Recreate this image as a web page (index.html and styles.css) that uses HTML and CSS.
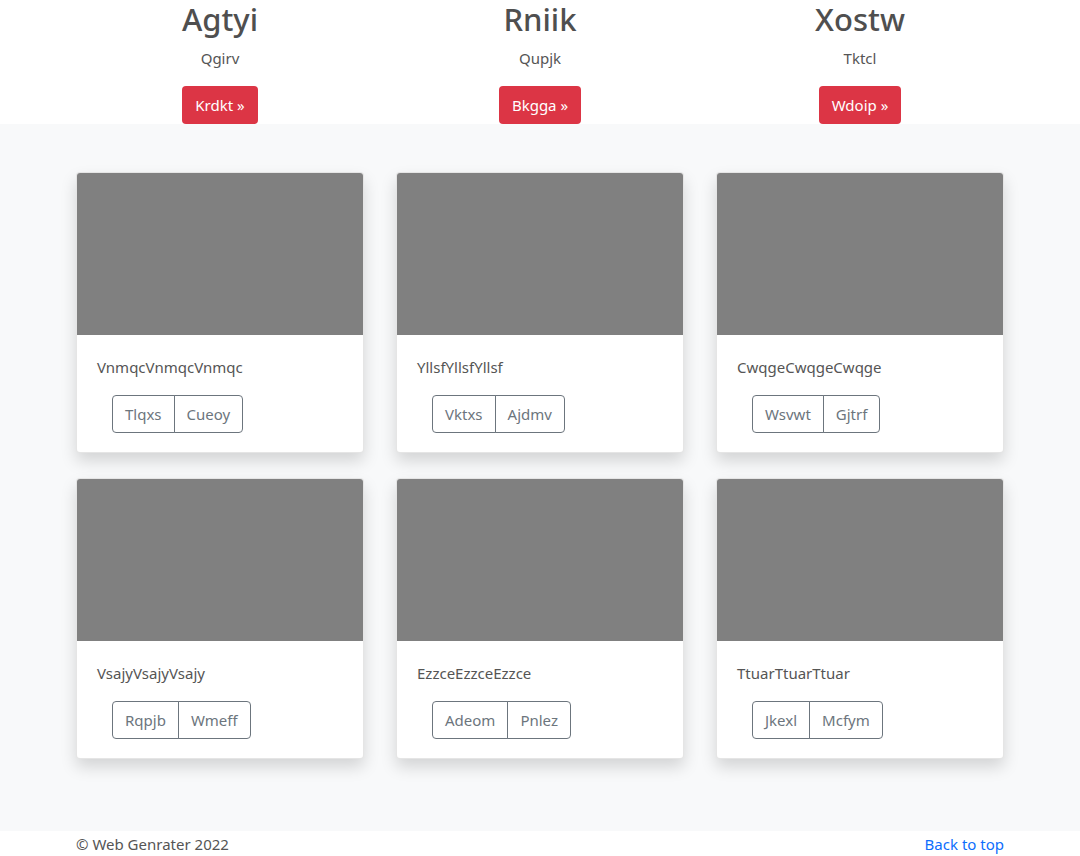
FILE: index.html
```html
<!DOCTYPE html>
<html lang="en">
<head>
<meta charset="utf-8">
<title>Album</title>
<link rel="stylesheet" href="styles.css">
</head>
<body>
<header class="top">
  <div class="top-grid">
    <div class="feature">
      <h2 class="feature-title">Agtyi</h2>
      <p class="feature-sub">Qgirv</p>
      <a class="btn-red" href="#">Krdkt &raquo;</a>
    </div>
    <div class="feature">
      <h2 class="feature-title">Rniik</h2>
      <p class="feature-sub">Qupjk</p>
      <a class="btn-red" href="#">Bkgga &raquo;</a>
    </div>
    <div class="feature">
      <h2 class="feature-title">Xostw</h2>
      <p class="feature-sub">Tktcl</p>
      <a class="btn-red" href="#">Wdoip &raquo;</a>
    </div>
  </div>
</header>
<main class="album">
  <div class="cards">
    <div class="card">
      <div class="thumb"></div>
      <div class="card-body">
        <p class="card-text">VnmqcVnmqcVnmqc</p>
        <div class="btn-group"><button class="btn-outline">Tlqxs</button><button class="btn-outline">Cueoy</button></div>
      </div>
    </div>
    <div class="card">
      <div class="thumb"></div>
      <div class="card-body">
        <p class="card-text">YllsfYllsfYllsf</p>
        <div class="btn-group"><button class="btn-outline">Vktxs</button><button class="btn-outline">Ajdmv</button></div>
      </div>
    </div>
    <div class="card">
      <div class="thumb"></div>
      <div class="card-body">
        <p class="card-text">CwqgeCwqgeCwqge</p>
        <div class="btn-group"><button class="btn-outline">Wsvwt</button><button class="btn-outline">Gjtrf</button></div>
      </div>
    </div>
    <div class="card">
      <div class="thumb"></div>
      <div class="card-body">
        <p class="card-text">VsajyVsajyVsajy</p>
        <div class="btn-group"><button class="btn-outline">Rqpjb</button><button class="btn-outline">Wmeff</button></div>
      </div>
    </div>
    <div class="card">
      <div class="thumb"></div>
      <div class="card-body">
        <p class="card-text">EzzceEzzceEzzce</p>
        <div class="btn-group"><button class="btn-outline">Adeom</button><button class="btn-outline">Pnlez</button></div>
      </div>
    </div>
    <div class="card">
      <div class="thumb"></div>
      <div class="card-body">
        <p class="card-text">TtuarTtuarTtuar</p>
        <div class="btn-group"><button class="btn-outline">Jkexl</button><button class="btn-outline">Mcfym</button></div>
      </div>
    </div>
  </div>
</main>
<footer class="footer">
  <div class="footer-inner">
    <p class="copy">&copy; Web Genrater 2022</p>
    <a class="back" href="#">Back to top</a>
  </div>
</footer>
</body>
</html>
```
FILE: styles.css
```css
* { box-sizing: border-box; }
html, body { margin: 0; padding: 0; }
body {
  font-family: "Segoe UI", "Noto Sans", "Open Sans", sans-serif;
  font-size: 15px;
  line-height: 24px;
  color: #555;
  background: #fff;
}
.top { background: #fff; }
.top-grid {
  width: 960px;
  margin: 0 auto;
  display: grid;
  grid-template-columns: repeat(3, 1fr);
  text-align: center;
}
.feature-title {
  margin: 0 0 8px;
  font-size: 31px;
  line-height: 38px;
  font-weight: 500;
  color: #4f4f4f;
}
.feature-sub { margin: 0 0 16px; }
.btn-red {
  display: inline-block;
  height: 38px;
  padding: 6px 13px;
  background: #dc3545;
  color: #fff;
  text-decoration: none;
  border-radius: 4px;
  line-height: 26px;
  vertical-align: top;
}
.album {
  background: #f8f9fa;
  padding: 48px 0 72px;
}
.cards {
  width: 928px;
  margin: 0 auto;
  display: grid;
  grid-template-columns: repeat(3, 288px);
  column-gap: 32px;
  row-gap: 25px;
}
.card {
  background: #fff;
  border: 1px solid rgba(0,0,0,.1);
  border-radius: 4px;
  overflow: hidden;
  box-shadow: 0 8px 16px rgba(0,0,0,.15);
}
.thumb { height: 162px; background: #808080; }
.card-body { padding: 20px 20px 19px; }
.card-text { margin: 0 0 16px; }
.btn-group { display: inline-flex; margin-left: 15px; }
.btn-outline {
  font: inherit;
  color: #6c757d;
  background: transparent;
  border: 1px solid #6c757d;
  padding: 6px 12px;
  height: 38px;
  line-height: 24px;
}
.btn-outline:first-child { border-radius: 4px 0 0 4px; }
.btn-outline:last-child { border-radius: 0 4px 4px 0; margin-left: -1px; }
.footer { background: #fff; padding-top: 1px; }
.footer-inner {
  width: 928px;
  margin: 0 auto;
  display: flex;
  justify-content: space-between;
}
.copy { margin: 0; }
.back { color: #0d6efd; text-decoration: none; }
```
